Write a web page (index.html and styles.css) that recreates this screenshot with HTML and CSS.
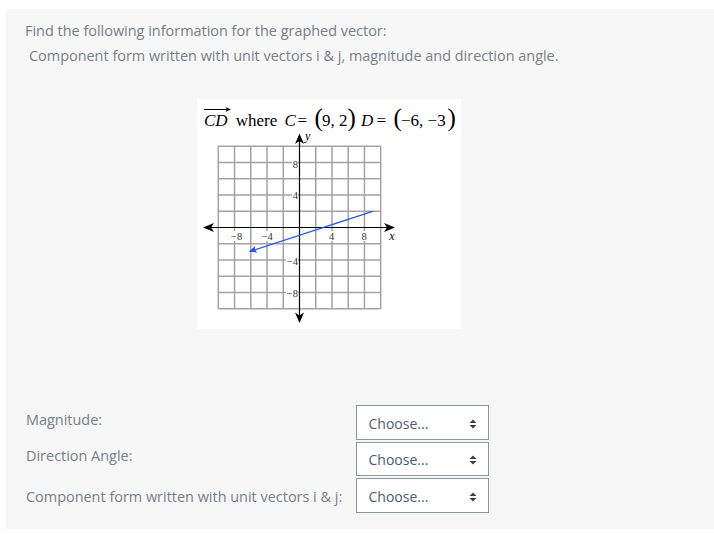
FILE: index.html
```html
<!DOCTYPE html>
<html lang="en">
<head>
<meta charset="utf-8">
<title>Graphed vector</title>
<link rel="stylesheet" href="styles.css">
</head>
<body>
<div class="panel">
  <p class="q">Find the following information for the graphed vector:</p>
  <p class="q q-indent">Component form written with unit vectors i &amp; j, magnitude and direction angle.</p>
  <div class="figure">
    <svg class="graph" width="264" height="230" viewBox="0 0 264 230" xmlns="http://www.w3.org/2000/svg">
      <rect x="0" y="0" width="264" height="230" fill="#fff"/>
      <!-- title -->
      <path d="M7 10.5 H32" stroke="#000" stroke-width="1"/>
      <path d="M34 10.5 L28.5 8 L29.8 10.5 L28.5 13 Z" fill="#000"/>
      <text class="t" y="26.7">
        <tspan x="7" class="it">CD</tspan>
        <tspan x="38.7">where</tspan>
        <tspan x="87.5" class="it">C</tspan>
        <tspan x="100.5">=</tspan>
        <tspan x="117.5" class="paren">(</tspan>
        <tspan x="125">9, 2</tspan>
        <tspan x="150.5" class="paren">)</tspan>
        <tspan x="164" class="it">D</tspan>
        <tspan x="179.5">=</tspan>
        <tspan x="196.5" class="paren">(</tspan>
        <tspan x="204">−6, −3</tspan>
        <tspan x="250.5" class="paren">)</tspan>
      </text>
      <!-- grid -->
      <path class="grid" d="M21.3 47.3 V209.7 M37.54 47.3 V209.7 M53.78 47.3 V209.7 M70.02 47.3 V209.7 M86.26 47.3 V209.7 M118.74 47.3 V209.7 M134.98 47.3 V209.7 M151.22 47.3 V209.7 M167.46 47.3 V209.7 M183.7 47.3 V209.7 M21.3 47.3 H183.7 M21.3 63.54 H183.7 M21.3 79.78 H183.7 M21.3 96.02 H183.7 M21.3 112.26 H183.7 M21.3 144.74 H183.7 M21.3 160.98 H183.7 M21.3 177.22 H183.7 M21.3 193.46 H183.7 M21.3 209.7 H183.7"/>
      <!-- tick labels -->
      <rect x="33" y="132" width="13" height="10" fill="#fff"/>
      <rect x="64" y="132" width="13" height="10" fill="#fff"/>
      <rect x="131" y="132" width="7" height="10" fill="#fff"/>
      <rect x="163.5" y="132" width="7" height="10" fill="#fff"/>
      <rect x="95" y="59" width="6" height="11" fill="#fff"/>
      <rect x="95" y="91" width="6" height="11" fill="#fff"/>
      <rect x="89" y="156" width="12" height="11" fill="#fff"/>
      <rect x="89" y="189" width="12" height="11" fill="#fff"/>
      <text class="tick" x="39.7" y="141" text-anchor="middle">−8</text>
      <text class="tick" x="70.3" y="141" text-anchor="middle">−4</text>
      <text class="tick" x="134.7" y="141" text-anchor="middle">4</text>
      <text class="tick" x="167" y="141" text-anchor="middle">8</text>
      <text class="tick" x="101" y="68.5" text-anchor="end">8</text>
      <text class="tick" x="101" y="99.5" text-anchor="end">4</text>
      <text class="tick" x="101" y="165.5" text-anchor="end">−4</text>
      <text class="tick" x="101" y="197.8" text-anchor="end">−8</text>
      <!-- axes -->
      <path d="M9 128.5 H195 M102.5 38 V220" stroke="#000" stroke-width="1.2" fill="none"/>
      <path d="M6 128.5 L17 124 L14 128.5 L17 133 Z" fill="#000"/>
      <path d="M198 128.5 L187 124 L190 128.5 L187 133 Z" fill="#000"/>
      <path d="M102.5 34.5 L98 45 L102.5 42 L107 45 Z" fill="#000"/>
      <path d="M102.5 224 L98 213.5 L102.5 216.5 L107 213.5 Z" fill="#000"/>
      <text class="axis-lbl" x="108" y="40.5">y</text>
      <text class="axis-lbl" x="195" y="140.5" text-anchor="middle">x</text>
      <!-- vector -->
      <path d="M175.6 112.3 L56 151.4" stroke="#1f55f2" stroke-width="1.3" fill="none"/>
      <path d="M51.6 152.8 L60.3 153.4 L57.8 150.6 L58.1 147 Z" fill="#1f55f2"/>
    </svg>
  </div>
  <div class="form">
    <span class="lbl">Magnitude:</span>
    <div class="select"><span class="select-text">Choose...</span><svg class="updown" width="8" height="10" viewBox="0 0 8 10"><path d="M0.5 4 L4 0.5 L7.5 4 Z M0.5 6 L4 9.5 L7.5 6 Z" fill="#3a3f45"/></svg></div>
    <span class="lbl">Direction Angle:</span>
    <div class="select"><span class="select-text">Choose...</span><svg class="updown" width="8" height="10" viewBox="0 0 8 10"><path d="M0.5 4 L4 0.5 L7.5 4 Z M0.5 6 L4 9.5 L7.5 6 Z" fill="#3a3f45"/></svg></div>
    <span class="lbl lbl-low">Component form written with unit vectors i &amp; j:</span>
    <div class="select"><span class="select-text">Choose...</span><svg class="updown" width="8" height="10" viewBox="0 0 8 10"><path d="M0.5 4 L4 0.5 L7.5 4 Z M0.5 6 L4 9.5 L7.5 6 Z" fill="#3a3f45"/></svg></div>
  </div>
</div>
</body>
</html>
```
FILE: styles.css
```css
html, body {
  margin: 0;
  padding: 0;
  background: #fff;
}
body {
  font-family: "Open Sans", "Liberation Sans", sans-serif;
  font-size: 14.45px;
  color: #787e86;
}
.panel {
  margin: 9px 0 0 6px;
  padding: 8.5px 0 16.5px 19px;
  background: #f7f7f7;
}
.q {
  margin: 0;
  line-height: 25px;
}
.q-indent {
  padding-left: 4px;
}
.figure {
  margin-top: 31.5px;
  padding-left: 172px;
}
.graph {
  display: block;
}
.graph .t {
  font-family: "Liberation Serif", "Times New Roman", serif;
  font-size: 17px;
  fill: #000;
}
.graph .it {
  font-style: italic;
}
.graph .paren {
  font-size: 25px;
}
.graph .grid {
  stroke: #a3a3a3;
  stroke-width: 1.5;
  fill: none;
}
.graph .tick {
  font-family: "Liberation Serif", "Times New Roman", serif;
  font-size: 10.5px;
  fill: #333;
}
.graph .axis-lbl {
  font-family: "Liberation Serif", "Times New Roman", serif;
  font-style: italic;
  font-size: 12px;
  fill: #000;
}
.form {
  margin-top: 76px;
  display: grid;
  grid-template-columns: 331px 133px;
  row-gap: 2px;
  align-items: start;
}
.lbl {
  padding: 3.5px 0 0 1px;
  line-height: 21px;
}
.lbl-low {
  padding-top: 7.5px;
}
.select {
  box-sizing: border-box;
  height: 34.5px;
  border: 1px solid #8f959e;
  background: #fff;
  display: flex;
  align-items: center;
  justify-content: space-between;
  padding: 3px 11px 0 11.5px;
  font-size: 14px;
}
.select-text {
  color: #4c5b70;
  line-height: 20px;
}
.updown {
  display: block;
}
```
